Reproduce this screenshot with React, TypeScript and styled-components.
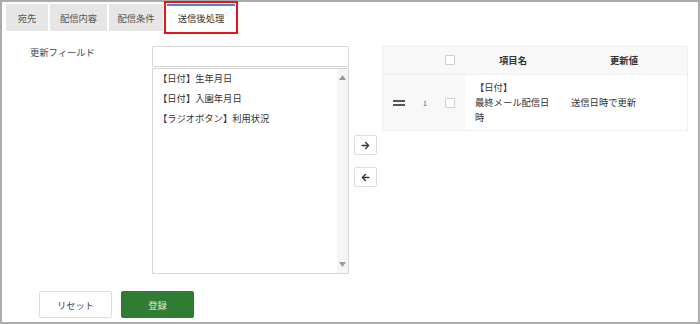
import React from 'react'
import styled, { createGlobalStyle } from 'styled-components'
import { FaArrowRight, FaArrowLeft } from 'react-icons/fa'

const GlobalStyle = createGlobalStyle`
  html, body { margin: 0; padding: 0; background: #fff; }
  body {
    font-family: "Noto Sans CJK JP", "Noto Sans", "Liberation Sans", sans-serif;
    font-size: 9.3px;
    color: #333;
  }
`

const tabs = [
  { label: '宛先', width: 42 },
  { label: '配信内容', width: 57 },
  { label: '配信条件', width: 54 },
  { label: '送信後処理', width: 68 },
]
const fields = ['【日付】生年月日', '【日付】入園年月日', '【ラジオボタン】利用状況']

export default function App() {
  return (
    <>
      <GlobalStyle />
      <Frame>
        <TabBar>
          {tabs.map((t, i) => (
            <Tab key={t.label} $width={t.width} $active={i === 3}>{t.label}</Tab>
          ))}
        </TabBar>

        <Body>
          <Label>更新フィールド</Label>

          <Lists>
            <Search />
            <ListBox>
              <Items>
                {fields.map(f => (
                  <Item key={f}>{f}</Item>
                ))}
              </Items>
              <ScrollBar>
                <svg width="7" height="5" viewBox="0 0 7 5"><polygon points="3.5,0 7,5 0,5" fill="#999" /></svg>
                <svg width="7" height="5" viewBox="0 0 7 5"><polygon points="0,0 7,0 3.5,5" fill="#999" /></svg>
              </ScrollBar>
            </ListBox>
          </Lists>

          <Mover>
            <MoveButton><FaArrowRight size={9} /></MoveButton>
            <MoveButton><FaArrowLeft size={9} /></MoveButton>
          </Mover>

          <Table>
            <HeadCell $gray />
            <HeadCell $gray />
            <HeadCell $gray><Check /></HeadCell>
            <HeadCell $gray $bold>項目名</HeadCell>
            <HeadCell $gray $bold>更新値</HeadCell>

            <RowCell $gray>
              <svg width="12" height="6" viewBox="0 0 12 6">
                <rect x="0" y="0" width="12" height="2" fill="#555" />
                <rect x="0" y="4" width="12" height="2" fill="#555" />
              </svg>
            </RowCell>
            <RowCell $gray><Num>1</Num></RowCell>
            <RowCell $gray><Check /></RowCell>
            <TextCell>【日付】<br />最終メール配信日時</TextCell>
            <TextCell>送信日時で更新</TextCell>
          </Table>
        </Body>

        <Footer>
          <ResetButton>リセット</ResetButton>
          <SubmitButton>登録</SubmitButton>
        </Footer>
      </Frame>
    </>
  )
}

const Frame = styled.div`
  width: 700px;
  height: 324px;
  box-sizing: border-box;
  border: 2px solid #ababab;
  display: flex;
  flex-direction: column;
`

const TabBar = styled.div`
  display: flex;
  gap: 2px;
  padding: 2px 0 0 4px;
`

const Tab = styled.div<{ $active?: boolean; $width: number }>`
  width: ${p => p.$width}px;
  height: 27px;
  box-sizing: border-box;
  display: flex;
  align-items: center;
  justify-content: center;
  background: ${p => (p.$active ? '#fff' : '#e6e6e6')};
  color: ${p => (p.$active ? '#333' : '#555')};
  border-top: 2px solid ${p => (p.$active ? '#3a8cd4' : '#e6e6e6')};
  margin-left: ${p => (p.$active ? '2px' : '0')};
  outline: ${p => (p.$active ? '2px solid #e8141c' : 'none')};
  outline-offset: 1px;
  line-height: 1;
`

const Body = styled.div`
  display: flex;
  align-items: flex-start;
  margin-top: 15px;
`

const Label = styled.div`
  width: 122px;
  padding-left: 28px;
  color: #444;
  line-height: 12px;
`

const Lists = styled.div`
  width: 197px;
  display: flex;
  flex-direction: column;
  gap: 1px;
`

const Search = styled.div`
  height: 21px;
  box-sizing: border-box;
  border: 1px solid #d6d6d6;
  border-radius: 1px;
`

const ListBox = styled.div`
  height: 206px;
  box-sizing: border-box;
  border: 1px solid #d6d6d6;
  display: flex;
`

const Items = styled.div`
  flex: 1;
  padding: 0 0 0 1px;
  margin-top: -1px;
`

const Item = styled.div`
  height: 20px;
  line-height: 20px;
  padding-left: 4px;
`

const ScrollBar = styled.div`
  width: 11px;
  background: #f5f5f5;
  display: flex;
  flex-direction: column;
  justify-content: space-between;
  align-items: center;
  padding: 6px 0 6px;
`

const Mover = styled.div`
  width: 33px;
  display: flex;
  flex-direction: column;
  align-items: center;
  gap: 12px;
  padding-top: 89px;
`

const MoveButton = styled.div`
  width: 23px;
  height: 20px;
  box-sizing: border-box;
  border: 1px solid #ddd;
  border-radius: 2px;
  background: #fff;
  color: #333;
  display: flex;
  align-items: center;
  justify-content: center;
`

const Table = styled.div`
  width: 306px;
  box-sizing: border-box;
  border: 1px solid #efefef;
  display: grid;
  grid-template-columns: 32px 20px 30px 96px 1fr;
  grid-template-rows: 28px 55px;
`

const HeadCell = styled.div<{ $gray?: boolean; $bold?: boolean }>`
  background: ${p => (p.$gray ? '#f8f8f8' : '#fff')};
  border-bottom: 1px solid #efefef;
  display: flex;
  align-items: center;
  justify-content: center;
  padding-bottom: 2px;
  font-weight: ${p => (p.$bold ? 700 : 400)};
  color: #333;
`

const RowCell = styled.div<{ $gray?: boolean }>`
  background: ${p => (p.$gray ? '#f8f8f8' : '#fff')};
  display: flex;
  align-items: center;
  justify-content: center;
`

const TextCell = styled.div`
  display: flex;
  align-items: center;
  padding: 0 11px 0 10px;
  line-height: 15px;
  color: #333;
`

const Num = styled.span`
  font-size: 7px;
  color: #555;
`

const Check = styled.span`
  width: 10px;
  height: 10px;
  box-sizing: border-box;
  border: 1px solid #cfcfcf;
  border-radius: 1px;
  background: #fff;
`

const Footer = styled.div`
  display: flex;
  gap: 9px;
  padding-left: 37px;
  margin-top: 17px;
`

const BaseButton = styled.div`
  width: 73px;
  height: 27px;
  box-sizing: border-box;
  border-radius: 2px;
  display: flex;
  align-items: center;
  justify-content: center;
`

const ResetButton = styled(BaseButton)`
  border: 1px solid #ddd;
  background: #fff;
  color: #444;
`

const SubmitButton = styled(BaseButton)`
  border: 1px solid #2d7a31;
  background: #2e7d32;
  color: #dfe9df;
`
